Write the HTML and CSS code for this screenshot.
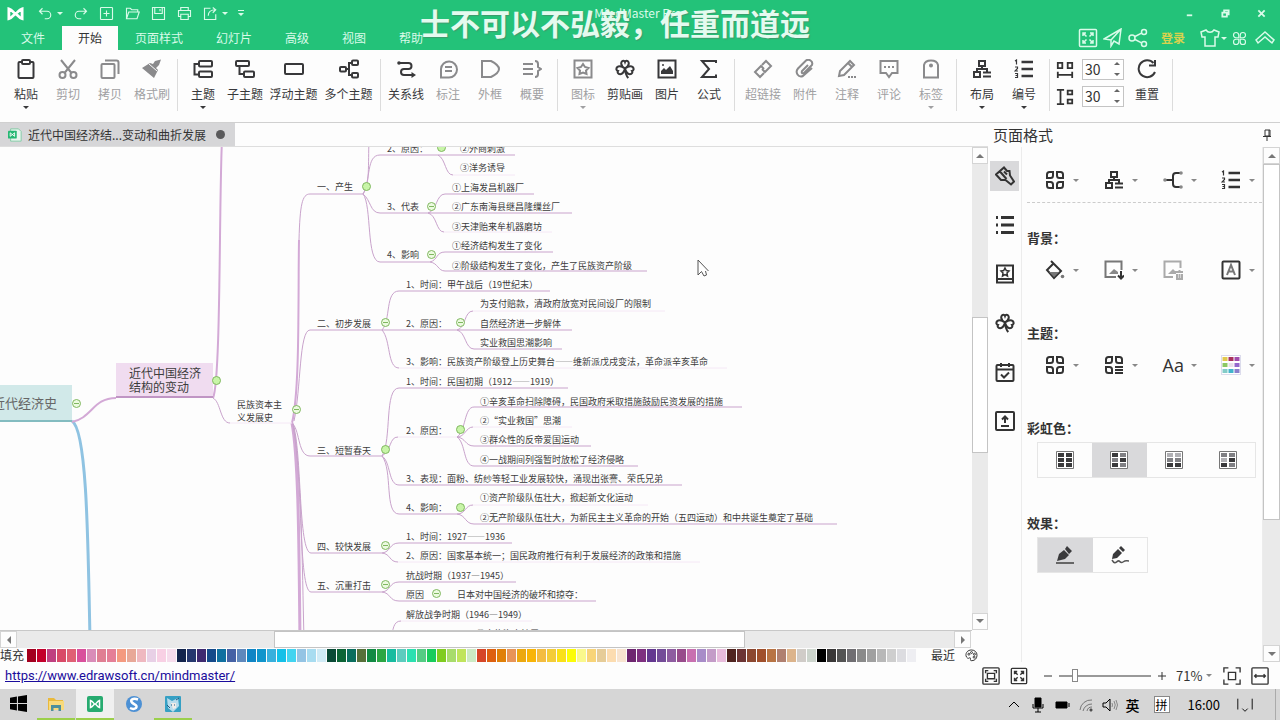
FILE: index.html
```html
<!DOCTYPE html>
<html lang="zh-CN">
<head>
<meta charset="utf-8">
<title>MindMaster Pro</title>
<link rel="stylesheet" href="styles.css">
</head>
<body>
<svg class="sprite" aria-hidden="true">
  <symbol id="clover" viewBox="0 0 20 20"><path d="M10 9.500C7 7.500 5.500 5.500 6.500 3.200 7.500 1 9.500 1.600 10 3c.5-1.400 2.500-2 3.500.2 1 2.300-.5 4.300-3.500 6.300zM10 9.500C13 7.300 16 6.500 17.700 8c1.800 2 .6 3.600-.7 3.900.8 1.300.2 3.400-2.200 3.300-2.600-.2-4-2.700-4.800-5.700zM10 9.500C7 7.300 4 6.500 2.300 8 .500 10 1.700 11.600 3 11.900c-.8 1.300-.2 3.400 2.200 3.300 2.600-.2 4-2.700 4.800-5.700zM10 9.500c.2 4 1 7 3.300 9.500"/></symbol>
  <symbol id="grid4" viewBox="0 0 20 20"><path d="M2 4.500Q2 2 4.500 2H8v3.500Q8 8 5.500 8H2zM12 2h3.500Q18 2 18 4.500V8h-3.500Q12 8 12 5.500zM2 12h3.500Q8 12 8 14.500V18H4.500Q2 18 2 15.500zM14.500 12H18v3.500q0 2.500-2.500 2.500H12v-3.500q0-2.500 2.500-2.500z"/></symbol>
  <symbol id="layout" viewBox="0 0 20 20"><path d="M7 2h6v5H7zM2 13h6v5H2zM10 7v3M5 13v-3h10v3M11 13.500h8M11 17.500h8" /></symbol>
  <symbol id="numbers" viewBox="0 0 20 20"><path d="M7.500 3H19M7.500 10H19M7.500 17H19" stroke-width="2.400"/><path d="M1 2l1.500-1v4.500M1 8h2.500v1.500L1 12h3M1 14.500h2.500v4H1M1.500 16.500h2" stroke-width="1.200"/></symbol>
  <symbol id="expand" viewBox="0 0 20 20"><rect x="1.500" y="1.500" width="17" height="17" rx="1"/><path d="M5 8V5h3M12 5h3v3M15 12v3h-3M8 15H5v-3M5 5l3.500 3.500M15 5l-3.500 3.500M15 15l-3.500-3.500M5 15l3.500-3.500"/></symbol>
  <symbol id="picture" viewBox="0 0 20 20"><rect x="1.500" y="1.500" width="17" height="17"/><path d="M4 15v-3l3-3 2 2 4-4 3 5v3z" fill="currentColor" stroke="none"/><circle cx="6" cy="6" r="1" fill="currentColor" stroke="none"/></symbol>
</svg>

<header class="titlebar">
  <div class="quick">
    <svg class="logo" viewBox="0 0 18 14"><path d="M2 12.500V2c4 1 5 5 7 5s3-4 7-5v10.500C12 11.500 11 7.500 9 7.500s-3 4-7 5z"/></svg>
    <button class="caret-after" aria-label="撤销"><svg viewBox="0 0 20 20"><path d="M6 3L2 7l4 4M2 7h10a5 5 0 010 10H9"/></svg></button>
    <button aria-label="重做"><svg viewBox="0 0 20 20"><path d="M14 3l4 4-4 4M18 7H8a5 5 0 000 10h3"/></svg></button>
    <button aria-label="新建"><svg viewBox="0 0 20 20"><rect x="2" y="2" width="16" height="16" rx="1"/><path d="M10 6v8M6 10h8"/></svg></button>
    <button aria-label="打开"><svg viewBox="0 0 20 20"><path d="M2 17V3h5l2 2h8v3M2 17l3-9h14l-3 9z"/></svg></button>
    <button aria-label="保存"><svg viewBox="0 0 20 20"><path d="M2 2h16v16H2zM5 2v8h10V2M12 4v3"/></svg></button>
    <button aria-label="打印"><svg viewBox="0 0 20 20"><path d="M5 6V2h10v4M5 14H2V6h16v8h-3M5 11h10v7H5z"/></svg></button>
    <button class="caret-after" aria-label="导出"><svg viewBox="0 0 20 20"><path d="M10 3H2v15h15v-7M7 13c0-5 4-8 10-8M13 2l4 3-4 4"/></svg></button>
    <button class="more" aria-label="更多"></button>
    <span class="app-name">MindMaster Pro</span>
    <div class="window-buttons">
      <button aria-label="最小化"><svg viewBox="0 0 10 10"><path d="M2 7h6"/></svg></button>
      <button aria-label="还原"><svg viewBox="0 0 10 10"><path d="M1.500 4h5v4.500h-5zM3.500 4V1.500h5V6h-2"/></svg></button>
      <button aria-label="关闭"><svg viewBox="0 0 10 10"><path d="M1.500 1.500l7 7M8.500 1.500l-7 7"/></svg></button>
    </div>
  </div>
  <nav class="menu">
    <button>文件</button><button class="active">开始</button><button>页面样式</button><button>幻灯片</button><button>高级</button><button>视图</button><button>帮助</button>
    <div class="menu-right">
      <button aria-label="全屏"><svg viewBox="0 0 20 20"><use href="#expand"/></svg></button>
      <button aria-label="发送"><svg viewBox="0 0 20 20"><path d="M1 11L18 1l-2 15-5-3-3 5v-6L18 1 8 12z"/></svg></button>
      <button aria-label="分享"><svg viewBox="0 0 20 20"><circle cx="4" cy="10" r="3"/><circle cx="16" cy="4" r="2.500"/><circle cx="16" cy="16" r="2.500"/><path d="M7 8.500l6.500-3.300M7 11.500l6.500 3.300"/></svg></button>
      <button class="login">登录</button>
      <button class="caret-after shirt" aria-label="皮肤"><svg viewBox="0 0 20 20"><path d="M1 4l5-2c2 3 6 3 8 0l5 2-1 5h-3v9H5V9H2z"/></svg></button>
      <button class="small" aria-label="应用"><svg viewBox="0 0 20 20"><path d="M9 9H5.500A3.500 3.500 0 119 5.500zM11 9V5.500A3.500 3.500 0 1114.500 9zM9 11v3.500A3.500 3.500 0 115.500 11zM11 11h3.500A3.500 3.500 0 1111 14.500z"/></svg></button>
      <button aria-label="收起"><svg viewBox="0 0 20 20"><path d="M1 12l9-8 9 8-2 3-7-6-7 6z"/></svg></button>
    </div>
  </nav>
  <div class="caption">士不可以不弘毅，任重而道远</div>
</header>

<div class="ribbon">
  <div class="group">
    <button class="tool drop"><svg viewBox="0 0 20 20"><rect x="2.500" y="3" width="15" height="16" rx="1"/><rect x="6" y="1" width="8" height="4" rx="1" fill="#fff"/></svg>粘贴</button>
    <button class="tool off"><svg viewBox="0 0 20 20"><path d="M3 1l10.500 13M17 1L6.500 14"/><circle cx="4.500" cy="16" r="3"/><circle cx="15.500" cy="16" r="3"/></svg>剪切</button>
    <button class="tool off"><svg viewBox="0 0 20 20"><rect x="1.500" y="5" width="13" height="14" rx="1"/><path d="M5 1.500h11.500q2 0 2 2V15"/></svg>拷贝</button>
    <button class="tool off"><svg viewBox="0 0 20 20"><path d="M0 9l8-5 3 1 2-3 6-1.500-2 5.500-3 3 2 2-4 8z" fill="currentColor" stroke="none"/><path d="M7 5l8 7" stroke="#fdfdfd" stroke-width="1"/></svg>格式刷</button>
  </div>
  <div class="group">
    <button class="tool drop"><svg viewBox="0 0 20 20"><rect x="6" y="2" width="13" height="5.500" rx="1"/><rect x="6" y="12.500" width="13" height="5.500" rx="1"/><path d="M6 5H1.500v10.500H6"/></svg>主题</button>
    <button class="tool"><svg viewBox="0 0 20 20"><rect x="1" y="2" width="13" height="5" rx="1"/><rect x="9" y="12.500" width="10" height="5.500" rx="1"/><path d="M4.500 7v8H9"/></svg>子主题</button>
    <button class="tool wide"><svg viewBox="0 0 20 20"><rect x="1" y="5" width="18" height="10" rx="1"/></svg>浮动主题</button>
    <button class="tool wide"><svg viewBox="0 0 20 20"><rect x="1" y="8" width="6" height="4.500" rx="1"/><rect x="13" y="1.500" width="6" height="4.500" rx="1"/><rect x="13" y="14" width="6" height="4.500" rx="1"/><path d="M7 10h3M13 4h-3v12h3"/></svg>多个主题</button>
  </div>
  <div class="group">
    <button class="tool"><svg viewBox="0 0 20 20"><path d="M4 4h8.500q3 0 3 3t-3 3H8q-3 0-3 3t3 3h9"/><circle cx="3" cy="4" r="1.800" fill="currentColor" stroke="none"/><path d="M15.500 13l4.500 3-4.500 3z" fill="currentColor" stroke="none"/></svg>关系线</button>
    <button class="tool off"><svg viewBox="0 0 20 20"><path d="M3 18.500V10a8 8 0 118 8.500z"/><path d="M7 8h7M7 12h7"/></svg>标注</button>
    <button class="tool off"><svg viewBox="0 0 20 20"><path d="M2 2h9q8 4 8 8t-8 8H2z"/></svg>外框</button>
    <button class="tool off"><svg viewBox="0 0 20 20"><path d="M1 5h10M1 10h10M1 15h10M13 2q3 0 3 3v3l3 2-3 2v3q0 3-3 3"/></svg>概要</button>
  </div>
  <div class="group">
    <button class="tool off drop"><svg viewBox="0 0 20 20"><rect x="1.500" y="1.500" width="17" height="17"/><path d="M10 5l2 3 3.500 1-2.500 2.500.5 3.500-3.500-1.500L6.500 15l.5-3.500L4.500 9 8 8z"/></svg>图标</button>
    <button class="tool"><svg viewBox="0 0 20 20"><use href="#clover"/></svg>剪贴画</button>
    <button class="tool"><svg viewBox="0 0 20 20"><use href="#picture"/></svg>图片</button>
    <button class="tool"><svg viewBox="0 0 20 20"><path d="M17 4V2H3l7 8-7 8h14v-2.500"/></svg>公式</button>
  </div>
  <div class="group links">
    <button class="tool off"><svg viewBox="0 0 20 20"><path d="M9 6l4-4 5 5-6 6-3-3M11 14l-4 4-5-5 6-6 3 3"/></svg>超链接</button>
    <button class="tool off"><svg viewBox="0 0 20 20"><path d="M13 6l-6 6q-1 3 2 2l8-8q1-3-1.500-4.500t-4.500 0l-8 8q-2.500 3-.5 6t5.500 1.500L17 9"/></svg>附件</button>
    <button class="tool off"><svg viewBox="0 0 20 20"><path d="M2 17l1-5L13 2l4 4L7 16zM11 4l4 4"/><path d="M11 18h8" stroke-dasharray="2 1"/></svg>注释</button>
    <button class="tool off"><svg viewBox="0 0 20 20"><path d="M1.500 2h17v12H13l-3 4-3-4H1.500z"/><path d="M5 8h2M9 8h2M13 8h2"/></svg>评论</button>
    <button class="tool off drop"><svg viewBox="0 0 20 20"><path d="M3 18.500V6q1-4.500 7-4.500T17 6v12.500z"/><circle cx="10" cy="6.500" r="1"/></svg>标签</button>
  </div>
  <div class="group">
    <button class="tool drop"><svg viewBox="0 0 20 20"><use href="#layout"/></svg>布局</button>
    <button class="tool drop"><svg viewBox="0 0 20 20"><use href="#numbers"/></svg>编号</button>
  </div>
  <div class="group sizes">
    <div class="spacing">
      <label for="gap-h"><svg viewBox="0 0 20 20"><path d="M2 2h5v6H2zM13 2h5v6h-5zM2 12v7M18 12v7M2 15.500h16"/></svg></label>
      <span class="spin"><input id="gap-h" type="text" value="30" aria-label="水平间距"></span>
      <label for="gap-v"><svg viewBox="0 0 20 20"><path d="M1 2h8M1 18h8M5 2v16M13 3h5v4h-5zM13 13h5v4h-5z"/></svg></label>
      <span class="spin"><input id="gap-v" type="text" value="30" aria-label="垂直间距"></span>
    </div>
    <button class="tool"><svg viewBox="0 0 20 20"><path d="M16.500 4A8.500 8.500 0 1018 13M18 1v5.500h-6"/></svg>重置</button>
  </div>
</div>

<main class="work">
  <section class="editor">
    <div class="doc-tabs">
      <div class="doc-tab"><svg viewBox="0 0 16 16"><path d="M3 1h9l3 3v11H3z" fill="#e8f5ee" stroke="#7cc9a0"/><rect x="0" y="3" width="10" height="9" rx="1" fill="#25b873" stroke="none"/><path d="M2.500 9.500v-4l5 4v-4l-5 4" fill="none" stroke="#fff"/></svg>近代中国经济结...变动和曲折发展<i class="dot"></i></div>
    </div>
    <div class="canvas">
      <svg class="wires" width="972" height="483" viewBox="0 147 972 483" aria-hidden="true">
        <g class="w3">
          <path d="M72 421C87 430 88 540 90 640" stroke="#8fc3e2"/>
          <path d="M292 423C299 460 299 560 300 640"/>
        </g>
        <g class="w2">
          <path d="M72 422C92 418 93 398 116 398"/>
          <path d="M213 398C221 380 219 200 222 140"/>
          <path d="M292 423C300 390 298 300 299 240"/>
        </g>
        <g class="w1">
          <path d="M213 398C221 402 220 423 230 423"/>
          <path d="M299 240C300 205 302 194 310 194H363M294 421C301 390 299 330 310 330H382M293 424C300 432 298 456 310 456H382M293 424C302 450 298 553 311 553H382M293 424C303 470 298 592 311 592H382M293 424C302 480 302 560 304 640"/>
          <path d="M363 194C370 185 368 165 369 140M363 194C371 180 366 155 380 155H515M363 194C371 200 370 213 380 213H428M363 194C372 205 366 262 380 262H430"/>
          <path d="M438 155C446 159 445 175 453 175M428 213C437 211 436 194 445 194H534M428 213H572M428 213C437 215 436 232 444 232M430 262C438 260 436 252 445 252H553M430 262C438 263 438 271 445 271H647"/>
          <path d="M382 330C391 320 385 291 399 291H550M382 330H457M382 330C391 340 387 368 399 368M457 330C466 328 464 311 473 311M457 330H572M457 330C466 332 465 349 474 349H562"/>
          <path d="M382 456C392 440 384 388 399 388H568M382 456C392 450 389 437 398 437M382 456C391 462 388 485 399 485H682M382 456C393 470 384 514 399 514H457"/>
          <path d="M457 437C466 431 464 407 474 407H742M457 437C465 437 466 427 473 427M457 437C466 438 465 446 474 446H591M457 437C466 443 463 466 474 466H638M457 514C466 514 465 505 473 505M457 514C466 515 465 524 474 524H837"/>
          <path d="M382 553C391 552 389 543 399 543H512M382 553C391 554 389 562 398 562M382 592C391 591 389 582 399 582H516M382 592C391 593 389 601 399 601H596M391 640C393 630 393 621 401 621"/>
        </g>
        <g class="w0"><path d="M230 423H292M453 175H515M444 232H552M473 311H665M399 368H727M398 437H457M473 427H572M473 505H648M398 562H700M401 621H532"/></g>
      </svg>
      <div class="root" style="left:-8px;top:238px">近代经济史</div>
      <div class="topic" style="left:116px;top:216px">近代中国经济<br>结构的变动</div>
      <div class="node" style="left:237px;top:251px">民族资本主<br>义发展史</div>
      <div class="node" style="left:387px;top:-5px">2、原因：</div>
      <div class="node" style="left:460px;top:-5px">②外商刺激</div>
      <div class="node" style="left:460px;top:14px">③洋务诱导</div>
      <div class="node" style="left:317px;top:33px">一、产生</div>
      <div class="node" style="left:452px;top:34px">①上海发昌机器厂</div>
      <div class="node" style="left:387px;top:53px">3、代表</div>
      <div class="node" style="left:452px;top:53px">②广东南海县继昌隆缫丝厂</div>
      <div class="node" style="left:452px;top:73px">③天津贻来牟机器磨坊</div>
      <div class="node" style="left:387px;top:101px">4、影响</div>
      <div class="node" style="left:452px;top:92px">①经济结构发生了变化</div>
      <div class="node" style="left:452px;top:112px">②阶级结构发生了变化，产生了民族资产阶级</div>
      <div class="node" style="left:406px;top:131px">1、时间：甲午战后（19世纪末）</div>
      <div class="node" style="left:480px;top:150px">为支付赔款，清政府放宽对民间设厂的限制</div>
      <div class="node" style="left:317px;top:170px">二、初步发展</div>
      <div class="node" style="left:406px;top:170px">2、原因：</div>
      <div class="node" style="left:480px;top:170px">自然经济进一步解体</div>
      <div class="node" style="left:480px;top:189px">实业救国思潮影响</div>
      <div class="node" style="left:406px;top:208px">3、影响：民族资产阶级登上历史舞台——维新派戊戌变法，革命派辛亥革命</div>
      <div class="node" style="left:406px;top:228px">1、时间：民国初期（1912——1919）</div>
      <div class="node" style="left:480px;top:248px">①辛亥革命扫除障碍，民国政府采取措施鼓励民资发展的措施</div>
      <div class="node" style="left:480px;top:267px">②“实业救国”思潮</div>
      <div class="node" style="left:480px;top:286px">③群众性的反帝爱国运动</div>
      <div class="node" style="left:480px;top:306px">④一战期间列强暂时放松了经济侵略</div>
      <div class="node" style="left:406px;top:277px">2、原因：</div>
      <div class="node" style="left:317px;top:297px">三、短暂春天</div>
      <div class="node" style="left:406px;top:325px">3、表现：面粉、纺纱等轻工业发展较快，涌现出张謇、荣氏兄弟</div>
      <div class="node" style="left:480px;top:344px">①资产阶级队伍壮大，掀起新文化运动</div>
      <div class="node" style="left:406px;top:354px">4、影响：</div>
      <div class="node" style="left:480px;top:364px">②无产阶级队伍壮大，为新民主主义革命的开始（五四运动）和中共诞生奠定了基础</div>
      <div class="node" style="left:317px;top:393px">四、较快发展</div>
      <div class="node" style="left:406px;top:383px">1、时间：1927——1936</div>
      <div class="node" style="left:406px;top:402px">2、原因：国家基本统一；国民政府推行有利于发展经济的政策和措施</div>
      <div class="node" style="left:317px;top:432px">五、沉重打击</div>
      <div class="node" style="left:406px;top:422px">抗战时期（1937—1945）</div>
      <div class="node" style="left:406px;top:441px">原因</div>
      <div class="node" style="left:457px;top:441px">日本对中国经济的破坏和掠夺：</div>
      <div class="node" style="left:406px;top:461px">解放战争时期（1946—1949）</div>
      <div class="node" style="left:476px;top:480px">①官僚资本扩展</div>
      <button class="fold" style="left:72px;top:252px" aria-label="折叠"></button>
      <button class="fold full" style="left:212px;top:229px" aria-label="折叠"></button>
      <button class="fold" style="left:292px;top:258px" aria-label="折叠"></button>
      <button class="fold full" style="left:362px;top:35px" aria-label="折叠"></button>
      <button class="fold full" style="left:437px;top:-4px" aria-label="折叠"></button>
      <button class="fold" style="left:427px;top:55px" aria-label="折叠"></button>
      <button class="fold" style="left:427px;top:103px" aria-label="折叠"></button>
      <button class="fold" style="left:381px;top:171px" aria-label="折叠"></button>
      <button class="fold" style="left:456px;top:171px" aria-label="折叠"></button>
      <button class="fold full" style="left:381px;top:298px" aria-label="折叠"></button>
      <button class="fold full" style="left:456px;top:278px" aria-label="折叠"></button>
      <button class="fold full" style="left:456px;top:356px" aria-label="折叠"></button>
      <button class="fold" style="left:381px;top:394px" aria-label="折叠"></button>
      <button class="fold" style="left:381px;top:433px" aria-label="折叠"></button>
      <button class="fold" style="left:432px;top:442px" aria-label="折叠"></button>
      <svg class="pointer" viewBox="0 0 12 18"><path d="M1 1v15l3.500-3.500 2.500 4.500 2.500-1-1-4M1 1l10.500 11"/></svg>
    </div>
    <div class="vscroll"><button class="up" aria-label="向上"></button><i class="track a"></i><i class="thumb"></i><i class="track b"></i><button class="down" aria-label="向下"></button></div>
    <div class="hscroll"><button class="left" aria-label="向左"></button><i class="track a"></i><i class="thumb"></i><i class="track b"></i><button class="right" aria-label="向右"></button></div>
    <div class="palette">
      <span class="fill-label">填充</span>
      <div class="swatches">
        <i style="background:#a3001f"></i><i style="background:#c3002b"></i><i style="background:#bf4080"></i><i style="background:#d94a68"></i><i style="background:#e06075"></i><i style="background:#d9509c"></i><i style="background:#d98cb8"></i><i style="background:#e07f93"></i><i style="background:#e57f97"></i><i style="background:#f49a80"></i><i style="background:#e8a898"></i><i style="background:#efb8c0"></i><i style="background:#e8d0e6"></i><i style="background:#f8d0e4"></i><i style="background:#f6dcec"></i>
        <i style="background:#14254d"></i><i style="background:#26386e"></i><i style="background:#3f2a70"></i><i style="background:#154a8a"></i><i style="background:#1070a0"></i><i style="background:#4562a5"></i><i style="background:#5f88bc"></i><i style="background:#1085c5"></i><i style="background:#1095cc"></i><i style="background:#38b0dd"></i><i style="background:#14c0e8"></i><i style="background:#42d4f0"></i><i style="background:#94c4e4"></i><i style="background:#a8dcf0"></i><i style="background:#d0ebf6"></i>
        <i style="background:#0a4a36"></i><i style="background:#0c6436"></i><i style="background:#0a6e5e"></i><i style="background:#57703a"></i><i style="background:#128a44"></i><i style="background:#2ca644"></i><i style="background:#18bca0"></i><i style="background:#5cccbe"></i><i style="background:#2ce0b0"></i><i style="background:#54cc84"></i><i style="background:#18cc5c"></i><i style="background:#80cc20"></i><i style="background:#a8dc6c"></i><i style="background:#c0e45c"></i><i style="background:#cceac4"></i>
        <i style="background:#d64628"></i><i style="background:#de6010"></i><i style="background:#e08008"></i><i style="background:#e89458"></i><i style="background:#eca810"></i><i style="background:#f8b408"></i><i style="background:#f4bc40"></i><i style="background:#f4cc38"></i><i style="background:#fae018"></i><i style="background:#fcfc08"></i><i style="background:#faf88c"></i><i style="background:#f8d478"></i><i style="background:#e6cc98"></i><i style="background:#fcdcb0"></i><i style="background:#f8e4d0"></i>
        <i style="background:#6e2670"></i><i style="background:#7e3080"></i><i style="background:#643890"></i><i style="background:#744c98"></i><i style="background:#8e5ca0"></i><i style="background:#984c8c"></i><i style="background:#c870b0"></i><i style="background:#a88cc8"></i><i style="background:#c49cc8"></i><i style="background:#e8bcdc"></i>
        <i style="background:#502420"></i><i style="background:#6c3434"></i><i style="background:#8c4830"></i><i style="background:#a0502c"></i><i style="background:#b87444"></i><i style="background:#b08070"></i><i style="background:#dcb48c"></i><i style="background:#d0ccc8"></i><i style="background:#ccd4cc"></i>
        <i style="background:#000"></i><i style="background:#3a3838"></i><i style="background:#545454"></i><i style="background:#706e72"></i><i style="background:#8a8a8a"></i><i style="background:#a0a0a0"></i><i style="background:#b8b8b8"></i><i style="background:#cecece"></i><i style="background:#dcdce0"></i><i style="background:#eeeef2"></i>
      </div>
      <span class="recent">最近</span>
      <svg viewBox="0 0 20 20"><path d="M10 1.500C4 1.500 1 6 1.500 10s4 5 5 4 2-1 2 1-1 3 2 3c5 0 8-4 8-8.500S15 1.500 10 1.500z"/><circle cx="6" cy="8" r="1.500"/><circle cx="10" cy="5.500" r="1.500"/><circle cx="14.500" cy="8" r="1.500"/><circle cx="14" cy="12.500" r="1.500"/></svg>
    </div>
  </section>

  <aside class="panel">
    <div class="panel-head"><span>页面格式</span><svg viewBox="0 0 10 12"><path d="M3 1h5v6H3zM7 1v6M1 7.500h8M5 8v4"/></svg></div>
    <div class="side-tabs">
      <button class="active" aria-label="格式"><svg viewBox="0 0 20 20"><path d="M9 1.500l3 3.500 2.500 0 .5 4.500 4 6-3 3-5.500-4.500-4.500 0-5-5.500zM4.500 5l7 8M9 5.500l3 3"/></svg></button>
      <button aria-label="大纲"><svg viewBox="0 0 20 20"><path d="M1 2.500h2M1 10h2M1 17.500h2M6 2.500h13M6 10h13M6 17.500h13" stroke-width="2.800"/></svg></button>
      <button aria-label="图标"><svg viewBox="0 0 20 20"><path d="M2 18.500v-17h16v17zM2 15h16"/><path d="M10 4l1.300 2.500 2.700.5-2 2 .5 3-2.500-1.500L7.500 12 8 9 6 7l2.700-.5z" stroke-width="1.500"/></svg></button>
      <button aria-label="剪贴画"><svg viewBox="0 0 20 20"><use href="#clover"/></svg></button>
      <button aria-label="任务"><svg viewBox="0 0 20 20"><rect x="1.500" y="3" width="17" height="16" rx="1"/><path d="M1.500 7.500h17M6 1v4M14 1v4M6 12.500l3 3 5-5"/></svg></button>
      <button aria-label="导出"><svg viewBox="0 0 20 20"><rect x="1" y="1" width="18" height="18" rx="1"/><path d="M10 12V6M7 8.500L10 5.500l3 3M6 15h8"/></svg></button>
    </div>
    <div class="props">
      <div class="icons first">
        <button class="drop-r" aria-label="布局"><svg viewBox="0 0 20 20"><use href="#grid4"/></svg></button>
        <button class="drop-r" aria-label="结构"><svg viewBox="0 0 20 20"><use href="#layout"/></svg></button>
        <button class="drop-r" aria-label="连接"><svg viewBox="0 0 20 20"><path d="M1 10h9M17 3h-4q-3 0-3 3v8q0 3 3 3h4"/><g fill="#888" stroke="none"><circle cx="2" cy="10" r="1.800"/><circle cx="18" cy="3" r="1.800"/><circle cx="18" cy="17" r="1.800"/></g></svg></button>
        <button class="drop-r" aria-label="编号"><svg viewBox="0 0 20 20"><use href="#numbers"/></svg></button>
      </div>
      <section><h3>背景：</h3><div class="icons">
        <button class="drop-r" aria-label="背景色"><svg viewBox="0 0 20 20"><path d="M6 1l10 10-7 7-7-8 6-6"/><path d="M4 12h10l-5 5z" fill="#777" stroke="none"/><circle cx="17.500" cy="16.500" r="1.800" fill="#777" stroke="none"/></svg></button>
        <button class="drop-r" aria-label="背景图"><svg viewBox="0 0 20 20"><path d="M12 17H1.500V1.500h16V10" stroke="#777"/><path d="M5 14l5-5 4 3v2z" fill="#888" stroke="none"/><path d="M17 11v7M14 15.500l3 3 3-3"/></svg></button>
        <button class="faded" aria-label="移除背景图"><svg viewBox="0 0 20 20"><path d="M10 17H1.500V1.500h16V8"/><path d="M5 14l5-5 3 3v2z" fill="currentColor" stroke="none"/><path d="M12 12h9M14 14v5h5v-5M16.500 10v2M16.500 14v5"/></svg></button>
        <button class="drop-r" aria-label="水印"><svg viewBox="0 0 20 20"><rect x="1.500" y="1.500" width="17" height="17" rx="1"/><path d="M6 15l4-10 4 10M7.500 11.500h5" stroke="#777"/></svg></button>
      </div></section>
      <section><h3>主题：</h3><div class="icons">
        <button class="drop-r" aria-label="主题"><svg viewBox="0 0 20 20"><use href="#grid4"/></svg></button>
        <button class="drop-r" aria-label="主题样式"><svg viewBox="0 0 20 20"><path d="M2 4.500Q2 2 4.500 2H8v3.500Q8 8 5.500 8H2zM12 2h3.500Q18 2 18 4.500V8h-3.500Q12 8 12 5.500zM2 12h3.500Q8 12 8 14.500V18H4.500Q2 18 2 15.500zM11 12h8M11 15h8M11 18h8"/></svg></button>
        <button class="drop-r font-btn">Aa</button>
        <button class="drop-r" aria-label="主题颜色"><svg viewBox="0 0 20 20"><g stroke="none"><path d="M0 0h20v20H0z" fill="#dcdcec"/><path d="M1 1h18v18H1z" fill="#fff"/><path d="M1.500 2h5v4h-5z" fill="#e2c84e"/><path d="M7.500 2h5v4h-5z" fill="#a8325e"/><path d="M13.500 2h5v4h-5z" fill="#a04cac"/><path d="M1.500 8h5v4h-5z" fill="#8cc864"/><path d="M7.500 8h5v4h-5z" fill="#e8e0ea"/><path d="M13.500 8h5v4h-5z" fill="#9468cc"/><path d="M1.500 14h5v4h-5z" fill="#84ccc8"/><path d="M7.500 14h5v4h-5z" fill="#42b4cc"/><path d="M13.500 14h5v4h-5z" fill="#8a80cc"/></g></svg></button>
      </div></section>
      <section><h3>彩虹色：</h3><div class="segments four">
        <button aria-label="彩虹色一"><svg viewBox="0 0 18 18"><path class="frame" d="M.5.5h17v17H.5z"/><path class="d" d="M2 2h6v4H2zM10 2h6v4h-6zM2 7h6v4H2zM10 7h6v4h-6zM2 12h6v4H2zM10 12h6v4h-6z"/></svg></button>
        <button class="active" aria-label="彩虹色二"><svg viewBox="0 0 18 18"><path class="frame" d="M.5.5h17v17H.5z"/><path class="d" d="M2 2h6v4H2zM10 7h6v4h-6zM2 12h6v4H2z"/><path class="m" d="M10 2h6v4h-6zM2 7h6v4H2zM10 12h6v4h-6z"/></svg></button>
        <button aria-label="彩虹色三"><svg viewBox="0 0 18 18"><path class="frame" d="M.5.5h17v17H.5z"/><path class="l" d="M2 2h6v4H2zM10 2h6v4h-6z"/><path class="m" d="M2 7h6v4H2zM10 7h6v4h-6z"/><path class="d" d="M2 12h6v4H2zM10 12h6v4h-6z"/></svg></button>
        <button aria-label="彩虹色四"><svg viewBox="0 0 18 18"><path class="frame" d="M.5.5h17v17H.5z"/><path class="m" d="M2 2h6v4H2zM10 2h6v4h-6zM10 12h6v4h-6z"/><path class="l" d="M2 7h6v4H2z"/><path class="d" d="M10 7h6v4h-6zM2 12h6v4H2z"/></svg></button>
      </div></section>
      <section><h3>效果：</h3><div class="segments two">
        <button class="active" aria-label="直线"><svg viewBox="0 0 18 18"><path class="d" d="M1 15l2-7 5-4 5 5-4 4zM9 3l2-3 5 5-3 3z"/><path d="M0 17h18" stroke="#666" stroke-width="2"/></svg></button>
        <button aria-label="手绘"><svg viewBox="0 0 18 18"><path class="d" d="M1 13l1-5 5-5 4 4-5 5zM8 2l2-2 4 4-2 2z"/><path d="M1 14c3 5 4 2 6 1s2 3 5 1 3-1 6-1" fill="none" stroke="#555" stroke-width="1.500"/></svg></button>
      </div></section>
    </div>
    <div class="vscroll"><button class="up" aria-label="向上"></button><i class="thumb"></i><i class="track b"></i><button class="down" aria-label="向下"></button></div>
  </aside>
</main>

<footer class="status">
  <a href="https://www.edrawsoft.cn/mindmaster/">https://www.edrawsoft.cn/mindmaster/</a>
  <div class="zoombar">
    <button aria-label="适应页面"><svg viewBox="0 0 20 20"><rect x="1" y="1" width="18" height="18" rx="1"/><path d="M6 7h8v6H6zM4 7V4h3M13 4h3v3M16 13v3h-3M7 16H4v-3"/></svg></button>
    <button aria-label="全屏"><svg viewBox="0 0 20 20"><use href="#expand"/></svg></button>
    <button class="step" aria-label="缩小"><svg viewBox="0 0 10 10"><path d="M1 5h8"/></svg></button>
    <input type="range" min="0" max="100" value="15" aria-label="缩放">
    <button class="step" aria-label="放大"><svg viewBox="0 0 10 10"><path d="M1 5h8M5 1v8"/></svg></button>
    <span class="percent">71%</span>
    <button aria-label="选区"><svg viewBox="0 0 20 20"><path d="M6 6h8v8H6zM1 6V1h5M14 1h5v5M19 14v5h-5M6 19H1v-5"/></svg></button>
    <button aria-label="页宽"><svg viewBox="0 0 20 20"><rect x="1" y="1" width="18" height="18" rx="1"/><path d="M4 10h12M6 8l-2 2 2 2M14 8l2 2-2 2"/></svg></button>
  </div>
</footer>

<div class="taskbar">
  <button class="task start" aria-label="开始"><svg viewBox="0 0 16 16"><path d="M0 2.500l6.500-1v6H0zM7.500 1.400L16 0v7.500H7.500zM0 8.500h6.500v6L0 13.500zM7.500 8.500H16V16l-8.500-1.400z"/></svg></button>
  <button class="task open" aria-label="资源管理器"><svg viewBox="0 0 18 16"><path d="M1 2h6l2 2h7v10H1z" fill="#e9b93c"/><path d="M2 5h15v9H2z" fill="#f8da7c"/><path d="M4 9h10v6h-2.500v-3h-5v3H4z" fill="#4d8f9c"/></svg></button>
  <button class="task open current" aria-label="MindMaster"><svg viewBox="0 0 18 18"><rect x="1" y="1" width="16" height="16" rx="2" fill="#27ab70"/><path d="M4.500 12.500v-7c3 1 3 3.500 4.500 3.500s1.500-2.500 4.500-3.500v7C10.500 11.500 10.500 9 9 9s-1.500 2.500-4.500 3.500z" fill="none" stroke="#fff" stroke-width="1.500"/></svg></button>
  <button class="task" aria-label="浏览器"><svg viewBox="0 0 18 18"><circle cx="9" cy="9" r="8" fill="#4c90d4"/><path d="M13 4.500C8 2.500 4.500 5 7 7.500s6 2.500 4 5.500c-2 1.500-4 1-6 0" fill="none" stroke="#fff" stroke-width="2.500"/></svg></button>
  <button class="task open" aria-label="应用"><svg viewBox="0 0 18 18"><rect x="1" y="1" width="16" height="16" rx="1" fill="#36a0c4"/><path d="M3 3l5 3 6-3 1 8-6 6-5-4z" fill="#b8dcec"/><path d="M7 8h5v5l-3 1z" fill="#f2ece8"/><path d="M3 10l3 3M12 5l3-2M7 10h1M10 10h1" stroke="#205880"/></svg></button>
  <div class="tray">
    <svg viewBox="0 0 16 16"><path d="M3 10l5-5 5 5"/></svg>
    <svg viewBox="0 0 16 16"><path d="M5 1h6v9H5z" fill="#000"/><path d="M3 7v4h10V7M8 11v4M5 15h6"/></svg>
    <svg viewBox="0 0 16 16"><path d="M2 5h11v6H2z" fill="#000"/><path d="M15 6v4"/></svg>
    <svg class="dim" viewBox="0 0 16 16"><path d="M2 13A11 11 0 0114 3M5 14a9 9 0 019-7M9 14a5 5 0 015-4"/><circle cx="13" cy="13" r="1.200" fill="#000"/></svg>
    <svg viewBox="0 0 16 16"><path d="M1 6h3l4-4v12l-4-4H1z"/><path d="M10 6q1 2 0 4M12 4q2.500 4 0 8M14 3q3 5 0 10" stroke="#888"/></svg>
    <span class="lang">英</span><span class="ime">拼</span><time>16:00</time>
    <svg class="note" viewBox="0 0 20 16"><path d="M2 1v12M18 1v12M7 12l3 3 3-3"/></svg>
  </div>
</div>
</body>
</html>
```

FILE: styles.css
```css
* { box-sizing: border-box; }
body {
  margin: 0;
  height: 100vh;
  display: flex;
  flex-direction: column;
  overflow: hidden;
  background: #fdfdfd;
  color: #333;
  font: 12px/16px "Noto Sans CJK SC", sans-serif;
}
button {
  margin: 0;
  padding: 0;
  border: 0;
  background: none;
  color: inherit;
  font: inherit;
}
svg { display: block; fill: none; stroke: currentColor; }
i { display: block; }
.sprite { position: absolute; width: 0; height: 0; }

/* title bar */
.titlebar { position: relative; background: #23c279; color: #d9fbe9; }
.quick { display: flex; align-items: center; height: 26px; padding: 0 6px 0 7px; }
.quick button { display: flex; align-items: center; width: 26px; height: 24px; }
.quick svg { width: 15px; height: 15px; stroke-width: 1.5; }
.quick .logo { width: 17px; margin-right: 14px; stroke: #fff; stroke-width: 3; }
.caret-after::after, .percent::after {
  content: "";
  margin-left: 4px;
  border: 3px solid transparent;
  border-top-color: currentColor;
  border-bottom: 0;
}
.quick .caret-after { width: 35px; }
.quick .more { width: 6px; flex-direction: column; justify-content: center; gap: 2px; }
.more::before { content: ""; width: 6px; height: 1px; background: currentColor; }
.more::after { content: ""; border: 3px solid transparent; border-top-color: currentColor; border-bottom: 0; }
.app-name { flex: 1; padding-right: 144px; text-align: center; }
.quick .window-buttons { display: flex; gap: 10px; }
.window-buttons button { justify-content: center; }
.window-buttons svg { width: 9px; height: 9px; stroke-width: 2; }
.menu { display: flex; align-items: center; gap: 1px; height: 24px; padding: 0 5px; }
.menu > button { height: 24px; padding: 0 16px; line-height: 24px; }
.menu > .active { background: #fdfdfd; color: #333; }
.menu-right { display: flex; align-items: center; gap: 5px; margin-left: auto; }
.menu-right button { display: flex; align-items: center; }
.menu-right svg { width: 20px; height: 20px; stroke-width: 1.5; }
.menu-right .small { margin-right: 3px; }
.menu-right .small svg { width: 15px; height: 15px; }
.menu-right .login { margin: 0 10px 0 8px; color: #d8d24e; font-weight: 700; }
.menu-right .shirt::after { margin-left: 1px; }
.caption {
  position: absolute;
  top: 1px;
  left: 420px;
  color: #e4faef;
  font-size: 30px;
  line-height: 42px;
  font-weight: 700;
  white-space: nowrap;
  text-shadow: 1px 1px 1px #3f9a6c;
}

/* ribbon */
.ribbon {
  display: flex;
  height: 73px;
  padding-left: 5px;
  border-bottom: 1px solid #d0d0d0;
  flex: none;
}
.group { display: flex; padding-top: 9px; }
.group::after { content: ""; width: 1px; height: 52px; margin: 0 4px; background: #dcdcdc; }
.links { padding-left: 3px; }
.sizes { padding-left: 2px; }
.sizes .tool { margin-left: 2px; }
.tool {
  display: flex;
  flex-direction: column;
  align-items: center;
  gap: 7px;
  width: 42px;
  height: 56px;
  color: #38383a;
  white-space: nowrap;
}
.wide { width: 55px; }
.tool svg { width: 20px; height: 20px; stroke-width: 2; flex: none; }
.off { color: #a0a0a2; }
.off svg { color: #8a8a8c; }
.drop::after {
  content: "";
  margin-top: -3px;
  border: 3px solid transparent;
  border-top-color: currentColor;
  border-bottom: 0;
}
.spacing {
  display: grid;
  grid-template-columns: 18px 42px;
  grid-template-rows: 21px 21px;
  gap: 6px 8px;
  align-items: center;
}
.spacing svg { width: 18px; height: 18px; stroke-width: 2; }
.spin { position: relative; height: 21px; }
.spin input {
  display: block;
  width: 100%;
  height: 21px;
  padding: 0 2px 2px;
  border: 1px solid #c4c4c4;
  background: #fff;
  color: #333;
  font: 14px/17px "Noto Sans CJK SC", sans-serif;
}
.spin::before, .spin::after { content: ""; position: absolute; right: 4px; border: 3px solid transparent; }
.spin::before { top: 3px; border-bottom-color: #666; border-top: 0; }
.spin::after { bottom: 4px; border-top-color: #666; border-bottom: 0; }

/* work area */
.work { flex: 1; min-height: 0; display: grid; grid-template-columns: 1fr 292px; }
.editor {
  display: grid;
  grid-template-columns: 1fr 16px;
  grid-template-rows: 24px 1fr 18px 14px;
  min-width: 0;
  min-height: 0;
}
.doc-tabs { grid-column: 1 / 3; border-bottom: 1px solid #dedede; }
.doc-tab { display: flex; align-items: center; width: 235px; height: 23px; padding-left: 8px; background: #d6d6d8; }
.doc-tab svg { width: 14px; height: 14px; margin-right: 6px; }
.dot { width: 9px; height: 9px; margin-left: 10px; border-radius: 50%; background: #5a5a5c; }
.canvas { position: relative; overflow: hidden; }
.wires { position: absolute; top: 0; left: 0; stroke: #d3a9d6; }
.w3 { stroke-width: 3; }
.w2 { stroke-width: 2; }
.w1 { stroke-width: 1; stroke: #c9a3cc; }
.w0 { stroke-width: 1; stroke: #f5e8f6; }
.node, .topic, .root { position: absolute; white-space: nowrap; color: #3c3c3c; }
.node { font-size: 9px; line-height: 13px; }
.topic {
  padding: 3px 12px 2px 13px;
  border-bottom: 2px solid #c095c4;
  background: #f0dcf0;
  font-size: 12px;
  line-height: 14px;
}
.root {
  padding: 8px 15px 8px 0;
  border-bottom: 2px solid #83bcc0;
  background: #d1e9e9;
  color: #666;
  font-size: 13px;
  line-height: 19px;
}
.fold {
  position: absolute;
  display: grid;
  place-items: center;
  width: 9px;
  height: 9px;
  border: 1px solid #80b860;
  border-radius: 50%;
  background: #ecfae0;
}
.fold::after { content: ""; width: 5px; height: 1px; background: #80b860; }
.full { background: #c8f5a8; }
.full::after { background: none; }
.pointer { position: absolute; left: 697px; top: 112px; width: 12px; height: 18px; stroke: #555; fill: #fff; }

/* scrollbars */
.vscroll { display: flex; flex-direction: column; }
.hscroll { display: flex; padding-right: 1px; border-top: 1px solid #c8c8c8; }
.vscroll button, .hscroll button { display: grid; place-items: center; flex: none; border: 1px solid #d4d4d4; }
.vscroll button { height: 17px; }
.hscroll button { width: 17px; }
.vscroll button::after, .hscroll button::after { content: ""; border: 4px solid transparent; }
.up::after { border-top: 0 !important; border-bottom-color: #777 !important; }
.down::after { border-bottom: 0 !important; border-top-color: #777 !important; }
.left::after { border-left: 0 !important; border-right-color: #777 !important; }
.right::after { border-right: 0 !important; border-left-color: #777 !important; }
.track { background: #eaeaea; }
.thumb { border: 1px solid #c4c4c4; background: #fff; }
.editor .vscroll .a { flex: 154; }
.editor .vscroll .thumb { flex: 135; }
.editor .vscroll .b { flex: 161; }
.hscroll .a { flex: 258; }
.hscroll .thumb { flex: 470; }
.hscroll .b { flex: 210; }
.panel .thumb { flex: 355; }
.panel .vscroll .b { flex: 126; }

/* colour strip */
.palette { grid-column: 1 / 3; display: flex; align-items: center; overflow: hidden; }
.fill-label { width: 27px; }
.swatches { display: flex; gap: 1px; height: 13px; }
.swatches i { width: 9px; }
.recent { margin: 0 10px 0 15px; }
.palette svg { width: 13px; height: 13px; stroke-width: 1.5; }

/* format panel */
.panel {
  display: grid;
  grid-template-columns: 34px 1fr 17px;
  grid-template-rows: 24px 1fr;
  min-height: 0;
}
.panel-head {
  grid-column: 1 / 4;
  display: flex;
  align-items: center;
  justify-content: space-between;
  padding: 0 8px 0 5px;
  font-size: 15px;
}
.panel-head svg { width: 10px; height: 12px; }
.side-tabs { display: flex; flex-direction: column; gap: 19px; padding: 14px 2px 0; border-right: 1px solid #ececec; }
.side-tabs button { display: grid; place-items: center; height: 30px; }
.side-tabs svg { width: 20px; height: 20px; stroke-width: 2; }
.side-tabs .active { background: #d9d9db; }
.props { padding: 15px 0 0 5px; border-right: 1px solid #ececec; }
.icons { display: grid; grid-template-columns: repeat(4, 1fr); height: 36px; padding-left: 18px; margin-right: -18px; }
.first { box-sizing: content-box; padding-bottom: 5px; margin-bottom: 25px; position: relative; }
.first::after { content: ""; position: absolute; left: 0; right: 18px; bottom: 0; border-bottom: 1px dashed #ccc; }
.icons button { display: flex; align-items: center; }
.icons svg { width: 20px; height: 20px; stroke-width: 2; }
.drop-r::after {
  content: "";
  margin-left: 8px;
  border: 3px solid transparent;
  border-top-color: #888;
  border-bottom: 0;
}
.faded { color: #aaa; }
.icons .font-btn { font: 18px/24px "Open Sans", "Noto Sans CJK SC", sans-serif; }
.props .font-btn::after { margin-left: 7px; }
.props section { margin-bottom: 35px; }
h3 { margin: 0 0 4px; font-size: 13px; line-height: 20px; font-weight: 700; }
.segments { display: grid; height: 36px; margin: 0 6px 0 10px; border: 1px solid #e6e6e6; }
.four { grid-template-columns: repeat(4, 1fr); }
.two { grid-template-columns: 1fr 1fr; width: 111px; }
.segments button { display: grid; place-items: center; }
.segments .active { background: #d9d9db; }
.segments svg { width: 18px; height: 18px; stroke: none; }
.frame { fill: #fff; stroke: #777; }
.d { fill: #3a3a3c; }
.m { fill: #808084; }
.l { fill: #b0b0b4; }

/* status bar */
.status { display: flex; align-items: center; justify-content: space-between; height: 27px; padding: 0 11px 0 5px; flex: none; }
.status a { color: #1a0c9c; font: 13px/16px Roboto, "Noto Sans CJK SC", sans-serif; }
.zoombar { display: flex; align-items: center; }
.zoombar button { margin-right: 10px; }
.zoombar button:last-child { margin-right: 0; }
.zoombar svg { width: 18px; height: 18px; stroke-width: 1.5; }
.zoombar .step { margin: 0 5px; }
.zoombar .step svg { width: 10px; height: 10px; stroke-width: 1; }
.zoombar input { appearance: none; width: 92px; height: 16px; margin: 0 1px; background: linear-gradient(#999, #999) center / 100% 2px no-repeat; }
.zoombar input::-webkit-slider-thumb { appearance: none; width: 6px; height: 13px; border: 1px solid #888; background: #fff; }
.percent { display: flex; align-items: center; width: 43px; margin: 0 4px; font-size: 13px; }
.percent::after { color: #888; }

/* system taskbar */
.taskbar { display: flex; gap: 1px; height: 31px; background: #d6d6d6; flex: none; }
.task { display: grid; place-items: center; width: 38px; border-bottom: 2px solid transparent; }
.task svg { width: 18px; height: 18px; stroke: none; }
.start { width: 36px; }
.start svg { width: 17px; height: 17px; fill: #000; }
.task.open { border-color: #9bcf4b; }
.task.current { background: #f0f0f0; }
.tray { display: flex; align-items: center; gap: 8px; margin: 0 4px 0 auto; padding-right: 21px; border-right: 1px solid #aaa; color: #000; }
.tray svg { width: 16px; height: 16px; }
.tray .dim { stroke: #777; }
.lang { font-size: 14px; font-weight: 500; }
.ime { margin: 0 6px; padding: 0 1px; border: 1px solid #888; background: #fff; line-height: 15px; }
.tray time { margin: 0 8px 0 4px; font-size: 13px; }
.tray .note { width: 18px; }
```
